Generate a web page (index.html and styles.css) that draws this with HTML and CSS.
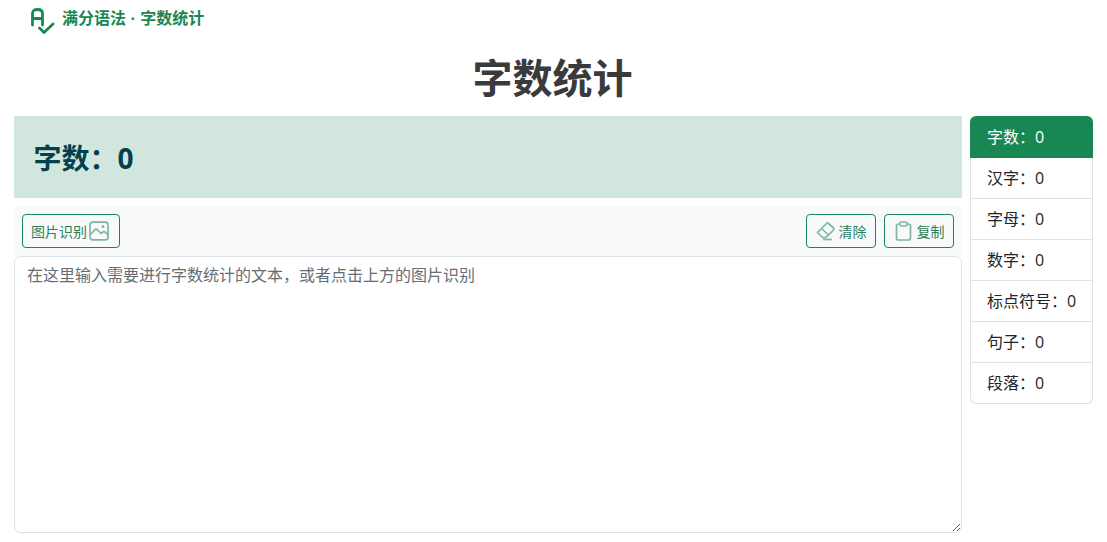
FILE: index.html
```html
<!DOCTYPE html>
<html lang="zh">
<head>
<meta charset="utf-8">
<title>字数统计</title>
<link rel="stylesheet" href="styles.css">
</head>
<body>
<header class="brand">
  <svg class="brand-icon" viewBox="0 0 26 26" width="26" height="26" fill="none" stroke="#198754" stroke-width="2.8" stroke-linecap="round" stroke-linejoin="round">
    <path d="M2.5 17V5.5Q2.5 1.5 7.5 1.5T12.5 5.5V17M2.5 10.5H12.5"/>
    <path d="M9.5 20L14 24.5L23 16"/>
  </svg>
  <span class="brand-text">满分语法 · 字数统计</span>
</header>
<h1 class="title">字数统计</h1>
<main class="layout">
  <section class="editor">
    <div class="alert">字数：0</div>
    <div class="toolbar">
      <button class="btn btn-ocr" type="button">图片识别
        <svg class="ico" viewBox="0 0 20 20" width="20" height="20" fill="none" stroke="#7db89c" stroke-width="1.7">
          <rect x="1" y="1.2" width="18" height="17.6" rx="2.5"/>
          <path d="M1.5 13.5L6 8.5Q7 7.5 8 8.5L12 12.5L14 11Q15 10.4 16 11L19 14"/>
          <circle cx="14" cy="5.5" r=".7"/>
        </svg>
      </button>
      <div class="spacer"></div>
      <button class="btn btn-wide" type="button">
        <svg class="ico" viewBox="0 0 20 20" width="20" height="20" fill="none" stroke="#7db89c" stroke-width="1.7" stroke-linejoin="round">
          <path d="M1.5 11.5L10.5 2.5Q11.5 1.5 12.5 2.5L17.5 7Q18.5 8 17.5 9L10 16.5H6.5L1.5 11.5Z"/>
          <path d="M5.5 7.5L12.5 14"/>
          <path d="M7 18.5H16"/>
        </svg>
        清除
      </button>
      <button class="btn btn-wide" type="button">
        <svg class="ico" viewBox="0 0 20 20" width="20" height="20" fill="none" stroke="#7db89c" stroke-width="1.7" stroke-linejoin="round">
          <path d="M6 3H4.5Q2.5 3 2.5 5V17Q2.5 19 4.5 19H14.5Q16.5 19 16.5 17V5Q16.5 3 14.5 3H13"/>
          <rect x="6" y="1" width="7" height="4" rx="1.5"/>
        </svg>
        复制
      </button>
    </div>
    <textarea class="input" placeholder="在这里输入需要进行字数统计的文本，或者点击上方的图片识别"></textarea>
  </section>
  <ul class="stats">
    <li class="stat active">字数：0</li>
    <li class="stat">汉字：0</li>
    <li class="stat">字母：0</li>
    <li class="stat">数字：0</li>
    <li class="stat">标点符号：0</li>
    <li class="stat">句子：0</li>
    <li class="stat">段落：0</li>
  </ul>
</main>
</body>
</html>
```
FILE: styles.css
```css
* { box-sizing: border-box; }
html, body { height: 100%; }
body {
  margin: 0;
  background: #fff;
  color: #212529;
  font-family: "Noto Sans CJK SC", Roboto, sans-serif;
  font-size: 16px;
  overflow: hidden;
}
.brand {
  display: flex;
  align-items: center;
  gap: 6px;
  height: 38px;
  padding: 4px 0 0 30px;
}
.brand-icon { flex: none; }
.brand-text {
  color: #198754;
  font-family: "Liberation Sans", "Noto Sans CJK SC", sans-serif;
  font-size: 16px;
  font-weight: 700;
  line-height: 20px;
  margin-top: -5px;
  white-space: nowrap;
}
.title {
  margin: 0;
  height: 78px;
  padding: 10px 2px 0 0;
  text-align: center;
  color: #3a3a3a;
  font-size: 40px;
  font-weight: 700;
  line-height: 56px;
}
.layout {
  display: flex;
  gap: 8px;
  padding: 0 14px;
}
.editor {
  display: flex;
  flex-direction: column;
  width: 948px;
  height: 417px;
}
.alert {
  height: 82px;
  margin-bottom: 8px;
  padding: 0 19.5px;
  background: #d1e7dd;
  color: #04414d;
  font-family: "Open Sans", "Noto Sans CJK SC", sans-serif;
  font-size: 28px;
  font-weight: 700;
  line-height: 84px;
}
.toolbar {
  display: flex;
  align-items: center;
  gap: 8px;
  height: 50px;
  padding: 0 8px;
  background: #f8f9fa;
}
.spacer { flex: 1; }
.btn {
  display: inline-flex;
  align-items: center;
  justify-content: center;
  gap: 3px;
  height: 34px;
  padding: 0 8px;
  background: transparent;
  border: 1px solid #198754;
  border-radius: 4px;
  color: #2f7d5a;
  font: 14px/20px "Noto Sans CJK SC", sans-serif;
}
.btn-ocr { width: 98px; justify-content: flex-start; gap: 2px; }
.btn-wide { width: 70px; padding: 0; }
.ico { flex: none; }
.input {
  flex: 1;
  display: block;
  width: 100%;
  padding: 5px 12px;
  background: #fff;
  border: 1px solid #dee2e6;
  border-radius: 6px;
  color: #212529;
  font: 16px/24px "Noto Sans CJK SC", sans-serif;
  outline: none;
}
.input::placeholder { color: #666d74; opacity: 1; }
.stats {
  flex: none;
  width: 123px;
  margin: 0;
  padding: 0;
  list-style: none;
}
.stat {
  height: 41px;
  padding: 0 16px;
  border: 1px solid #dee2e6;
  border-top: 0;
  font-family: "Open Sans", "Noto Sans CJK SC", sans-serif;
  font-size: 16px;
  line-height: 40px;
  white-space: nowrap;
}
.stat:last-child { border-radius: 0 0 6px 6px; }
.stat.active {
  height: 42px;
  padding: 0 17px;
  background: #198754;
  border: 0;
  border-radius: 6px 6px 0 0;
  color: #fff;
  line-height: 43px;
}
```
